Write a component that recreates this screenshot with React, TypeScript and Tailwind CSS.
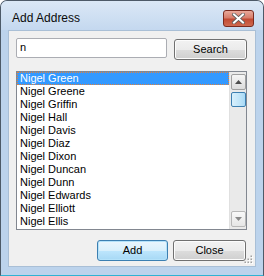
const names = [
  'Nigel Green',
  'Nigel Greene',
  'Nigel Griffin',
  'Nigel Hall',
  'Nigel Davis',
  'Nigel Diaz',
  'Nigel Dixon',
  'Nigel Duncan',
  'Nigel Dunn',
  'Nigel Edwards',
  'Nigel Elliott',
  'Nigel Ellis',
]

const WinButton = ({ label, primary, className }: { label: string; primary?: boolean; className: string }) => (
  <button
    className={`${className} rounded-[3px] border text-[11px] text-black leading-none ${
      primary
        ? 'border-[#3c7fb1] bg-[linear-gradient(to_bottom,#eaf6fd_0%,#d9f0fc_50%,#bee6fd_50%,#a7d9f5_100%)] shadow-[inset_0_0_0_1px_#b4e2fa]'
        : 'border-[#707070] bg-[linear-gradient(to_bottom,#f2f2f2_0%,#ebebeb_50%,#dddddd_50%,#cfcfcf_100%)] shadow-[inset_0_0_0_1px_#fcfcfc]'
    }`}
  >
    {label}
  </button>
)

const App = () => {
  return (
    <div className="w-[264px] h-[276px] flex flex-col overflow-hidden rounded-t-[7px] border border-[#4d5a68] border-b-[#2fb3d3] bg-[#bcd3ec] font-['Liberation_Sans',Arial,sans-serif]">
      {/* Title bar */}
      <div className="h-[29px] flex items-start justify-between pl-[11px] pr-[9px] bg-[linear-gradient(to_bottom,#dbe8f6,#c4d8ef)]">
        <span className="mt-[11px] text-[12px] leading-none text-[#0a0a0a]">Add Address</span>
        <div className="mt-[9px] w-[31px] h-[17px] rounded-[3px] border border-[#7a2a1e] bg-[linear-gradient(to_bottom,#e9a99b_0%,#d77d6b_45%,#c24a33_55%,#cf6a50_100%)] flex items-center justify-center">
          <svg width="13" height="11" viewBox="0 0 13 11">
            <path d="M2 1.5 L11 9.5 M11 1.5 L2 9.5" stroke="#5b5b5b" strokeWidth="3.6" strokeLinecap="square" />
            <path d="M2 1.5 L11 9.5 M11 1.5 L2 9.5" stroke="#ffffff" strokeWidth="2" strokeLinecap="square" />
          </svg>
        </div>
      </div>

      {/* Client area */}
      <div className="relative mx-[7px] h-[237px] bg-[#f0f0f0] border border-[#a9bfd6] pl-[7px] pr-[8px] pt-[7px] flex flex-col">
        <div className="flex items-start">
          <div className="w-[151px] h-[20px] bg-white border border-[#abadb3] rounded-[2px] text-[11px] text-black pl-[3px] pt-[3px] leading-none">
            n
          </div>
          <WinButton label="Search" className="ml-[7px] mt-[1px] w-[73px] h-[21px]" />
        </div>

        {/* List box */}
        <div className="mt-[11px] w-[231px] h-[159px] bg-white border border-[#828790] flex">
          <div className="flex-1 flex flex-col">
            {names.map((n, i) => (
              <div
                key={n}
                className={`h-[13px] pl-[3px] text-[11px] leading-[13px] whitespace-nowrap ${
                  i === 0 ? 'bg-[#3399ff] text-white outline-1 outline-dotted outline-[#e0803c] -outline-offset-1' : 'text-black'
                }`}
              >
                {n}
              </div>
            ))}
          </div>

          {/* Scrollbar */}
          <div className="w-[17px] bg-[#eaeaea] border-l border-[#e0e0e0] flex flex-col items-center py-[2px]">
            <div className="w-[15px] h-[16px] rounded-[2px] border border-[#a0a0a0] bg-[linear-gradient(to_bottom,#f6f6f6,#dcdcdc)] flex items-center justify-center">
              <svg width="7" height="4" viewBox="0 0 7 4">
                <path d="M0 4 L3.5 0 L7 4 Z" fill="#4d4d4d" />
              </svg>
            </div>
            <div className="mt-[2px] w-[15px] h-[15px] rounded-[2px] border border-[#3c7fb1] bg-[linear-gradient(to_right,#d9f0fc,#bfe4f8_60%,#a8d9f6)]" />
            <div className="flex-1" />
            <div className="w-[15px] h-[16px] rounded-[2px] border border-[#b8b8b8] bg-[linear-gradient(to_bottom,#f9f9f9,#e6e6e6)] flex items-center justify-center">
              <svg width="7" height="4" viewBox="0 0 7 4">
                <path d="M0 0 L7 0 L3.5 4 Z" fill="#8a8a8a" />
              </svg>
            </div>
          </div>
        </div>

        {/* Buttons */}
        <div className="mt-[10px] flex justify-end gap-[5px] pr-[1px]">
          <WinButton label="Add" primary className="w-[71px] h-[21px]" />
          <WinButton label="Close" className="w-[73px] h-[21px]" />
        </div>

        {/* Size grip */}
        <svg className="absolute right-[2px] bottom-[2px]" width="9" height="9" viewBox="0 0 9 9">
          {[
            [7, 1],
            [4, 4],
            [7, 4],
            [1, 7],
            [4, 7],
            [7, 7],
          ].map(([x, y]) => (
            <g key={`${x}-${y}`}>
              <rect x={x + 0.5} y={y + 0.5} width="1.5" height="1.5" fill="#ffffff" />
              <rect x={x - 0.5} y={y - 0.5} width="1.5" height="1.5" fill="#a0a0a0" />
            </g>
          ))}
        </svg>
      </div>
    </div>
  )
}

export default App
